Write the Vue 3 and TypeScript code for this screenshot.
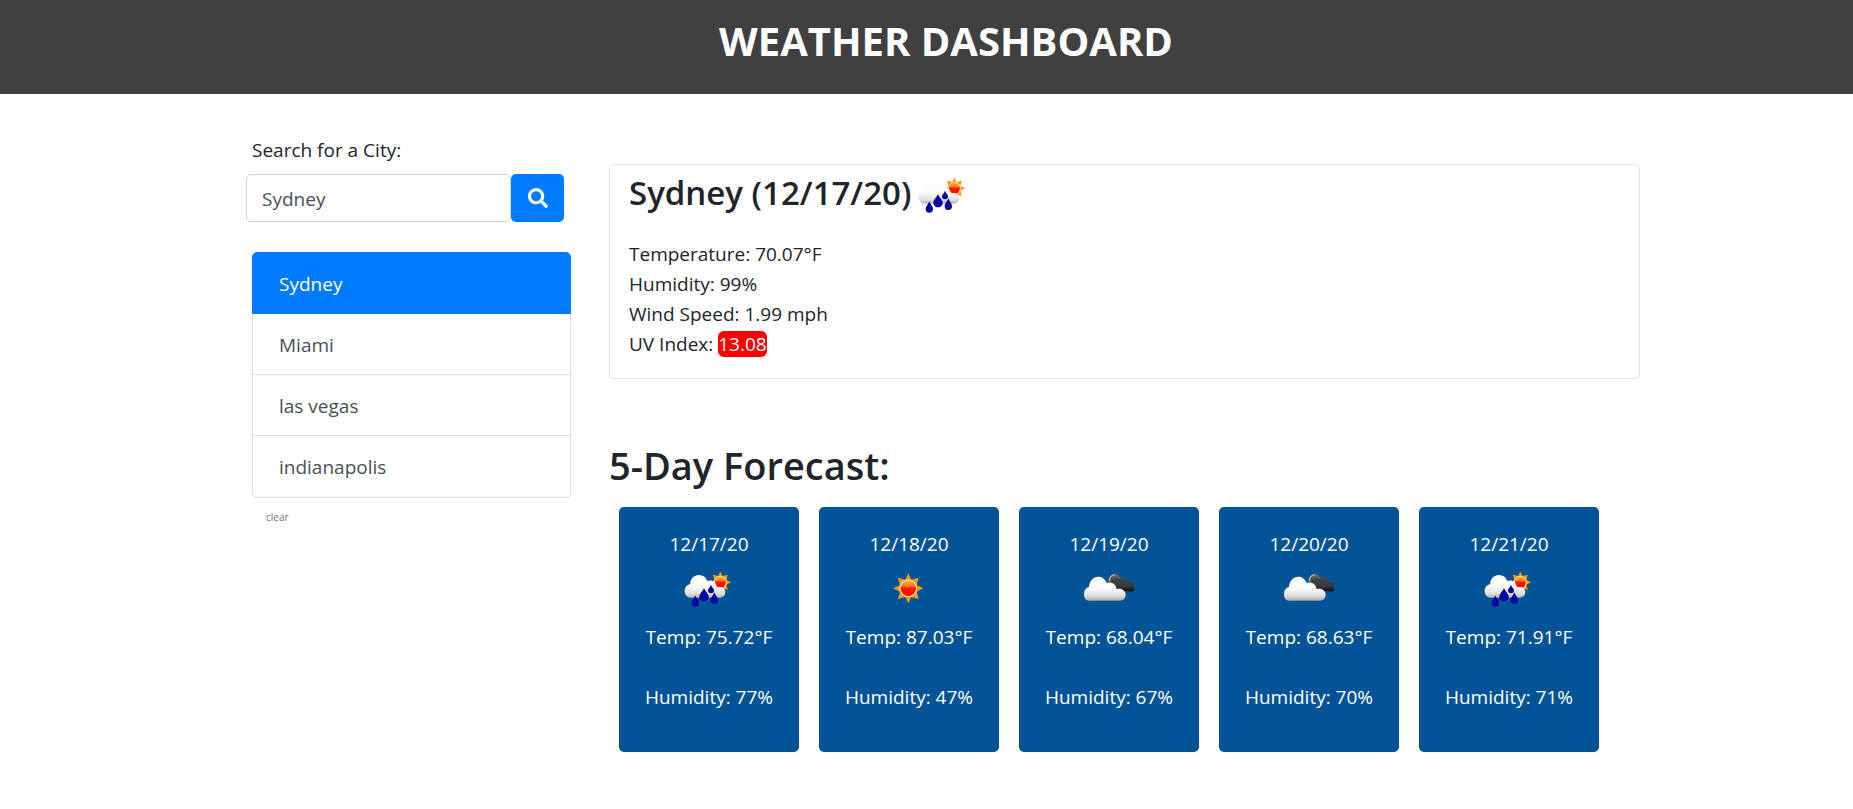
<script setup lang="ts">
import { ref } from 'vue'

type Sky = 'rain' | 'sun' | 'clouds'
interface Day {
  date: string
  sky: Sky
  temp: string
  humidity: string
}

const query = ref('Sydney')
const cities = ref<string[]>(['Sydney', 'Miami', 'las vegas', 'indianapolis'])
const active = ref('Sydney')

const days: Day[] = [
  { date: '12/17/20', sky: 'rain', temp: '75.72', humidity: '77' },
  { date: '12/18/20', sky: 'sun', temp: '87.03', humidity: '47' },
  { date: '12/19/20', sky: 'clouds', temp: '68.04', humidity: '67' },
  { date: '12/20/20', sky: 'clouds', temp: '68.63', humidity: '70' },
  { date: '12/21/20', sky: 'rain', temp: '71.91', humidity: '71' },
]

function search(): void {
  const city = query.value.trim()
  if (!city) return
  if (!cities.value.includes(city)) cities.value.unshift(city)
  active.value = city
}
</script>

<template>
  <svg class="defs" width="0" height="0" aria-hidden="true">
    <defs>
      <linearGradient id="sunFill" x1="0" y1="0" x2="0" y2="1">
        <stop offset="0" stop-color="#ffb040" />
        <stop offset="0.35" stop-color="#ff7a10" />
        <stop offset="0.5" stop-color="#ff1800" />
        <stop offset="1" stop-color="#ff0000" />
      </linearGradient>
      <linearGradient id="cloudFill" gradientUnits="userSpaceOnUse" x1="0" y1="50" x2="0" y2="122">
        <stop offset="0" stop-color="#ffffff" />
        <stop offset="0.5" stop-color="#fafafa" />
        <stop offset="0.8" stop-color="#dedede" />
        <stop offset="1" stop-color="#a8a8a8" />
      </linearGradient>
      <linearGradient id="darkFill" gradientUnits="userSpaceOnUse" x1="0" y1="42" x2="0" y2="94">
        <stop offset="0" stop-color="#77777a" />
        <stop offset="0.35" stop-color="#404040" />
        <stop offset="0.7" stop-color="#3a3a3a" />
        <stop offset="1" stop-color="#080808" />
      </linearGradient>
      <radialGradient id="dropFill" cx="0.5" cy="0.65" r="0.6">
        <stop offset="0" stop-color="#0000d0" />
        <stop offset="1" stop-color="#00006c" />
      </radialGradient>
      <g id="sunShape">
        <path fill="#f59a1a" d="M115 40l9 19 22-6-6 22 20 10-20 10 6 22-22-6-9 19-9-19-22 6 6-22-20-10 20-10-6-22 22 6z" />
        <circle cx="115" cy="85" r="27" fill="#ffd58c" />
        <circle cx="115" cy="85" r="23" fill="url(#sunFill)" />
      </g>
      <symbol id="rain" viewBox="51 15 150 150">
        <use href="#sunShape" transform="translate(160 73) scale(0.72) translate(-115 -85)" />
        <path fill="url(#cloudFill)" d="M70 119C58 118 53 108 53 99c0-11 7-18 16-20 1-17 12-28 27-28 12 0 21 6 25 18 13-5 26 2 28 16 2 1 3 2 4 3 12-3 22 5 22 15 0 9-6 15-15 16z" />
        <g fill="url(#dropFill)">
          <path d="M85 112c2 8 11 14 11 23a11 11 0 0 1-22 0c0-9 9-15 11-23z" />
          <path d="M111 89c2 10 14 17 14 28a14 13 0 0 1-28 0c0-11 12-18 14-28z" />
          <path d="M132 80c1 7 9 11 9 17a9 9 0 0 1-18 0c0-6 8-10 9-17z" />
          <path d="M142 103c2 8 11 15 11 24a11 11 0 0 1-22 0c0-9 9-16 11-24z" />
        </g>
      </symbol>
      <symbol id="sun" viewBox="42 9 150 150">
        <use href="#sunShape" />
      </symbol>
      <symbol id="clouds" viewBox="42 9 150 150">
        <path fill="url(#darkFill)" d="M117 66c-3-13 5-24 17-24 8 0 14 4 18 12 12-3 21 2 24 13 12-1 21 5 21 14 0 8-6 13-15 13h-40z" />
        <path fill="none" stroke="#b8b8b8" stroke-width="4" d="M119 64c-2-12 5-19 16-20" />
        <path fill="url(#cloudFill)" d="M57 122C46 121 42 113 42 102c0-12 6-19 15-21 1-18 12-31 28-31 12 0 21 8 25 19 14-5 28 3 30 18 15-4 27 5 27 18 0 10-7 16-16 17z" />
      </symbol>
    </defs>
  </svg>

  <header class="banner">
    <h1>WEATHER DASHBOARD</h1>
  </header>

  <main class="page">
    <aside class="sidebar">
      <form @submit.prevent="search">
        <label for="city">Search for a City:</label>
        <div class="search-row">
          <input id="city" v-model="query" type="text" />
          <button class="go" type="submit" aria-label="Search">
            <svg viewBox="0 0 512 512" width="20" height="20" aria-hidden="true">
              <path fill="currentColor" d="M505 442.700L405.300 343c-4.500-4.500-10.600-7-17-7H372c27.600-35.300 44-79.700 44-128C416 93.100 322.900 0 208 0S0 93.100 0 208s93.100 208 208 208c48.300 0 92.700-16.400 128-44v16.300c0 6.400 2.500 12.500 7 17l99.700 99.700c9.400 9.400 24.600 9.400 33.900 0l28.300-28.300c9.400-9.400 9.400-24.600.1-34zM208 336c-70.700 0-128-57.200-128-128 0-70.700 57.200-128 128-128 70.700 0 128 57.200 128 128 0 70.700-57.200 128-128 128z" />
            </svg>
          </button>
        </div>
      </form>
      <div class="cities">
        <button
          v-for="city in cities"
          :key="city"
          type="button"
          class="city"
          :class="{ active: city === active }"
          @click="active = city"
        >{{ city }}</button>
      </div>
      <button type="button" class="clear" @click="cities = []">clear</button>
    </aside>

    <div class="content">
      <section class="current">
        <h2>
          <span>Sydney (12/17/20)</span>
          <svg class="sky" role="img" aria-label="Rain"><use href="#rain" /></svg>
        </h2>
        <p>Temperature: 70.07°F</p>
        <p>Humidity: 99%</p>
        <p>Wind Speed: 1.99 mph</p>
        <p>UV Index: <span class="uv">13.08</span></p>
      </section>

      <section>
        <h2 class="forecast-title">5-Day Forecast:</h2>
        <div class="days">
          <article v-for="day in days" :key="day.date" class="day">
            <p>{{ day.date }}</p>
            <svg class="sky" role="img" :aria-label="day.sky"><use :href="'#' + day.sky" /></svg>
            <p>Temp: {{ day.temp }}°F</p>
            <p>Humidity: {{ day.humidity }}%</p>
          </article>
        </div>
      </section>
    </div>
  </main>
</template>

<style>
body {
  margin: 0;
  background: #fff;
}
#app {
  font-family: 'Segoe UI', 'Open Sans', 'Noto Sans', sans-serif;
  font-size: 19px;
  line-height: 30px;
  color: #212529;
}
</style>

<style scoped>
* {
  box-sizing: border-box;
}
h1,
h2,
p {
  margin: 0;
}
button,
input {
  font: inherit;
}
button {
  cursor: pointer;
}
.defs {
  position: absolute;
}
.banner {
  padding: 17px 0 29px 39px;
  background: #404040;
  color: #fff;
  text-align: center;
}
.banner h1 {
  font-size: 40px;
  line-height: 48px;
  font-weight: 700;
}
.page {
  display: flex;
  gap: 38px;
  padding: 41px 213px 56px 246px;
}
.sidebar {
  flex: 0 0 325px;
}
label {
  display: block;
  margin: 0 0 9px 6px;
}
.search-row {
  display: flex;
  width: 318px;
}
.search-row input {
  flex: 1;
  min-width: 0;
  height: 48px;
  padding: 1px 15px 0;
  border: 1px solid #ced4da;
  border-radius: 5px;
  color: #495057;
  background: #fff;
}
.go {
  display: flex;
  align-items: center;
  justify-content: center;
  width: 53px;
  height: 48px;
  padding: 0;
  border: 0;
  border-radius: 5px;
  background: #007bff;
  color: #fff;
}
.cities {
  margin: 30px 0 0 6px;
}
.city {
  display: block;
  width: 100%;
  padding: 16px 26px 14px;
  border: 1px solid #dfdfdf;
  border-top: 0;
  background: #fff;
  color: #495057;
  text-align: left;
}
.city:first-child {
  border-top: 1px solid #dfdfdf;
  border-radius: 5px 5px 0 0;
}
.city:last-child {
  padding-bottom: 15px;
  border-radius: 0 0 5px 5px;
}
.city.active {
  border-color: #007bff;
  background: #007bff;
  color: #fff;
}
.clear {
  display: block;
  margin: 10px 0 0 20px;
  padding: 0;
  border: 0;
  background: none;
  color: #6c757d;
  font-size: 10px;
  line-height: 18px;
}
.content {
  flex: 1;
  min-width: 0;
}
.current {
  margin-top: 29px;
  padding: 4px 19px 19px;
  border: 1px solid #dee2e6;
  border-radius: 5px;
}
.current h2 {
  display: flex;
  align-items: center;
  gap: 7px;
  margin-bottom: 20px;
  font-size: 33px;
  line-height: 48px;
  font-weight: 600;
}
.current h2 span {
  padding-bottom: 2px;
}
.sky {
  display: block;
  flex: none;
  width: 50px;
  height: 50px;
}
.uv {
  border-radius: 6px;
  background: #f00;
  color: #fff;
}
.forecast-title {
  margin: 62px 0 18px;
  font-size: 38px;
  line-height: 48px;
  font-weight: 600;
}
.days {
  display: flex;
  flex-wrap: wrap;
  gap: 20px;
  padding-left: 10px;
}
.day {
  display: flex;
  flex-direction: column;
  align-items: center;
  width: 180px;
  padding: 22px 0 40px;
  border-radius: 5px;
  background: #035397;
  color: #fff;
}
.day .sky {
  margin: 4px 0 9px;
}
.day p + p {
  margin-top: 30px;
}
</style>
